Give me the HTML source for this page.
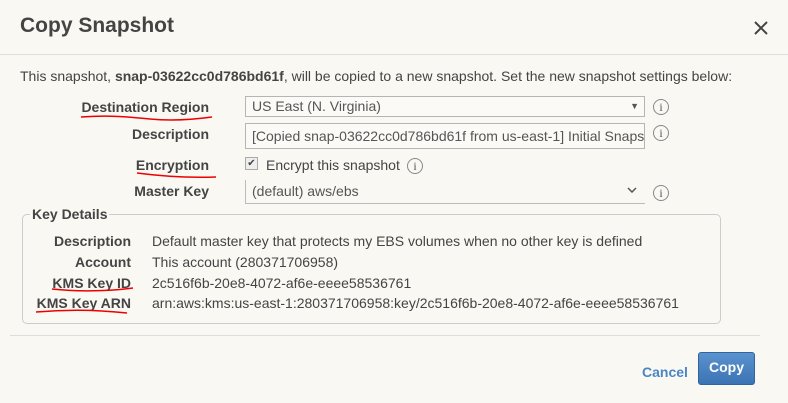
<!DOCTYPE html>
<html><head><style>
body{margin:0;width:788px;height:403px;background:#faf8f3;font-family:"Liberation Sans",Arial,sans-serif;color:#444;position:relative;overflow:hidden;font-size:14px}
.a{position:absolute;white-space:nowrap}
.lbl{font-weight:bold;text-align:right}
.box{position:absolute;border:1px solid #b5b5b5;background:#fbfaf7;box-sizing:border-box;padding:0 6px;color:#555;font-size:14px;overflow:hidden;white-space:nowrap}
.i{position:absolute;width:14px;height:14px;border:1px solid #888;border-radius:50%;font-size:12px;line-height:14px;text-align:center;color:#555;font-family:"Liberation Serif",serif}
</style></head><body>
<div class="a" style="left:20px;top:14px;font-size:21px;font-weight:bold;color:#444">Copy Snapshot</div>
<svg class="a" style="left:754px;top:21px" width="14" height="14"><path d="M1 1L13 13M13 1L1 13" stroke="#444" stroke-width="2"/></svg>
<div class="a" style="left:0;top:54px;width:788px;height:1px;background:#ddd"></div>
<div class="a" style="left:20px;top:68px">This snapshot, <b>snap-03622cc0d786bd61f</b>, will be copied to a new snapshot. Set the new snapshot settings below:</div>
<div class="a lbl" style="right:579px;top:99px">Destination Region</div>
<div class="a lbl" style="right:579px;top:126px">Description</div>
<div class="a lbl" style="right:579px;top:157px">Encryption</div>
<div class="a lbl" style="right:579px;top:183px">Master Key</div>
<div class="box" style="left:245px;top:96px;width:400px;height:21px;line-height:19px">US East (N. Virginia)<span style="position:absolute;right:5px;font-size:9px">▼</span></div>
<div class="box" style="left:245px;top:123px;width:400px;height:26px;line-height:24px">[Copied snap-03622cc0d786bd61f from us-east-1] Initial Snapshot</div>
<div class="a" style="left:245px;top:157px;width:11px;height:11px;border:1px solid #aaa;background:#eee;font-size:10px;line-height:11px;text-align:center">✔</div>
<div class="a" style="left:266px;top:157px;font-size:14px">Encrypt this snapshot</div>
<div class="i" style="left:407px;top:158px">i</div>
<div class="a" style="left:245px;top:180px;width:400px;height:24px;border-left:1px solid #bbb;border-bottom:1px solid #bbb;box-sizing:border-box"></div>
<div class="a" style="left:252px;top:183px;color:#555">(default) aws/ebs</div>
<svg class="a" style="left:627px;top:187px" width="10" height="6"><path d="M1 1L5 5L9 1" stroke="#555" stroke-width="1.5" fill="none"/></svg>
<div class="i" style="left:653px;top:99px">i</div>
<div class="i" style="left:653px;top:125px">i</div>
<div class="i" style="left:653px;top:185px">i</div>
<div class="a" style="left:22px;top:214px;width:699px;height:110px;border:1px solid #ccc;border-radius:5px;box-sizing:border-box"></div>
<div class="a lbl" style="left:30px;top:206px;background:#faf8f3;padding:0 2px">Key Details</div>
<div class="a lbl" style="right:657px;top:233px">Description</div>
<div class="a lbl" style="right:657px;top:254px">Account</div>
<div class="a lbl" style="right:657px;top:275px">KMS Key ID</div>
<div class="a lbl" style="right:657px;top:295px">KMS Key ARN</div>
<div class="a" style="left:152px;top:233px">Default master key that protects my EBS volumes when no other key is defined</div>
<div class="a" style="left:152px;top:254px">This account (280371706958)</div>
<div class="a" style="left:152px;top:275px">2c516f6b-20e8-4072-af6e-eeee58536761</div>
<div class="a" style="left:152px;top:295px">arn:aws:kms:us-east-1:280371706958:key/2c516f6b-20e8-4072-af6e-eeee58536761</div>
<div class="a" style="left:10px;top:335px;width:750px;height:1px;background:#ddd"></div>
<div class="a" style="left:642px;top:364px;font-weight:bold;color:#4a86c5">Cancel</div>
<div class="a" style="left:698px;top:352px;width:57px;height:33px;border:1px solid #2f66a0;border-radius:3px;box-sizing:border-box;background:linear-gradient(#5b93cf,#3b74b4);color:#fff;font-weight:bold;font-size:14px;text-align:center;line-height:28px">Copy</div>
<svg class="a" style="left:0;top:0" width="788" height="403">
<g fill="none" stroke="#e00" stroke-width="1.5">
<path d="M81 117 C110 115,130 117,150 119 S190 120,212 117"/>
<path d="M137 173 C160 176,190 178,216 177"/>
<path d="M52 289 C80 292,110 291,133 288"/>
<path d="M36 312 C70 309,100 310,127 313"/>
</g></svg>
</body></html>
